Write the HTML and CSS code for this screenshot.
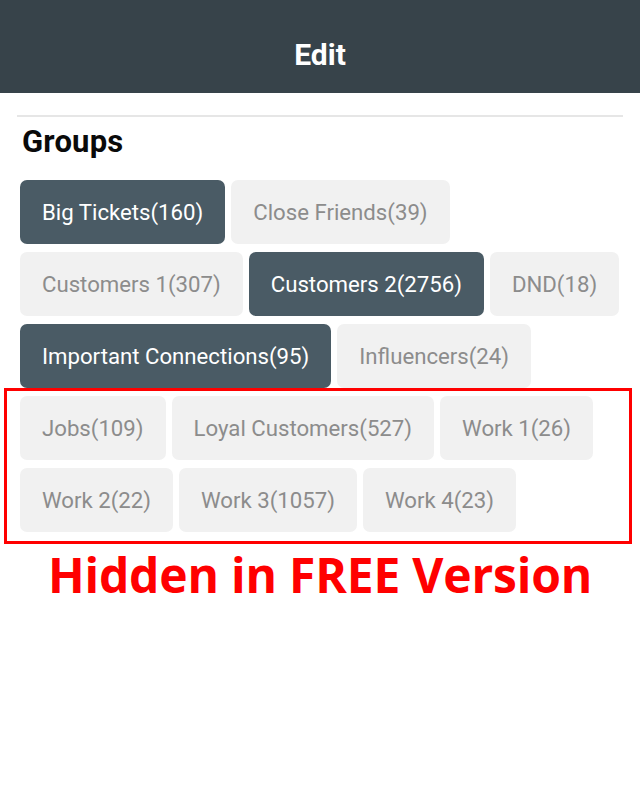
FILE: index.html
```html
<!DOCTYPE html>
<html>
<head>
<meta charset="utf-8">
<link rel="stylesheet" href="styles.css">
</head>
<body>
<header class="appbar"><h1 class="title">Edit</h1></header>
<main class="content">
  <hr class="divider">
  <h2 class="section-title">Groups</h2>
  <div class="chips-wrap">
    <div class="chip-row">
      <span class="chip chip-on">Big Tickets(160)</span>
      <span class="chip">Close Friends(39)</span>
    </div>
    <div class="chip-row">
      <span class="chip">Customers 1(307)</span>
      <span class="chip chip-on">Customers 2(2756)</span>
      <span class="chip">DND(18)</span>
    </div>
    <div class="chip-row">
      <span class="chip chip-on">Important Connections(95)</span>
      <span class="chip">Influencers(24)</span>
    </div>
    <div class="chip-row">
      <span class="chip">Jobs(109)</span>
      <span class="chip">Loyal Customers(527)</span>
      <span class="chip">Work 1(26)</span>
    </div>
    <div class="chip-row">
      <span class="chip">Work 2(22)</span>
      <span class="chip">Work 3(1057)</span>
      <span class="chip">Work 4(23)</span>
    </div>
    <div class="hidden-box"></div>
  </div>
  <p class="notice">Hidden in FREE Version</p>
</main>
</body>
</html>
```
FILE: styles.css
```css
html, body {
  margin: 0;
  padding: 0;
  background: #ffffff;
  font-family: Roboto, "Noto Sans", sans-serif;
}
.appbar {
  height: 93px;
  box-sizing: border-box;
  padding-top: 16px;
  background: #37434a;
  display: flex;
  align-items: center;
  justify-content: center;
}
.title {
  margin: 0;
  color: #ffffff;
  font-size: 30px;
  font-weight: 700;
  letter-spacing: 0;
}
.content {
  padding: 22px 17px 0 17px;
}
.divider {
  margin: 0;
  border: 0;
  height: 2px;
  background: #e6e6e6;
}
.section-title {
  margin: 8px 0 0 5px;
  font-size: 31px;
  font-weight: 700;
  color: #0a0a0a;
  letter-spacing: 0.2px;
  line-height: 34px;
}
.chips-wrap {
  position: relative;
  margin-top: 21px;
  padding-left: 3px;
  display: flex;
  flex-direction: column;
  gap: 8px;
}
.chip-row {
  display: flex;
  gap: 6px;
}
.chip {
  flex-shrink: 0;
  white-space: nowrap;
  height: 64px;
  display: flex;
  align-items: center;
  padding: 0 22px;
  border-radius: 7px;
  background: #f1f1f1;
  color: #8c8c8c;
  font-size: 22.2px;
  letter-spacing: 0;
}
.chip-on {
  background: #4a5b65;
  color: #ffffff;
}
.hidden-box {
  position: absolute;
  left: -13px;
  right: -9px;
  top: 208px;
  height: 150px;
  border: 3px solid #ff0000;
}
.notice {
  margin: 13px 0 0 0;
  text-align: center;
  color: #ff0000;
  font-family: "Open Sans", sans-serif;
  font-weight: 700;
  font-size: 48px;
  letter-spacing: -0.2px;
  line-height: 60px;
}
```
